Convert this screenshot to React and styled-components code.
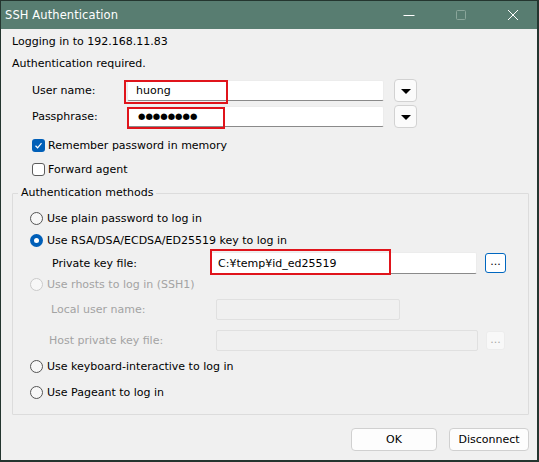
import React from "react";
import styled, { createGlobalStyle, css } from "styled-components";

// TeraTerm style "SSH Authentication" dialog

const GlobalStyle = createGlobalStyle`
	html, body {
		margin: 0;
		padding: 0;
		background: #000;
	}
	body {
		font-family: "DejaVu Sans", Verdana, sans-serif;
		font-size: 11px;
		color: #000;
	}
	* {
		box-sizing: border-box;
	}
`;

const Window = styled.div`
	width: 539px;
	height: 462px;
	display: flex;
	flex-direction: column;
	background: #f0f0f0;
	border: 1px solid #24352f;
	border-right-width: 2px;
	border-bottom-width: 2px;
	overflow: hidden;
`;

const TitleBar = styled.div`
	height: 28px;
	flex: none;
	display: flex;
	align-items: center;
	background: #587d71;
	color: #fff;
	padding-left: 4px;
`;

const Title = styled.div`
	flex: 1;
	font-size: 11.5px;
	letter-spacing: 0.1px;
`;

const Controls = styled.div`
	display: flex;
	height: 100%;
	margin-right: -2px;
`;

const ControlCell = styled.div`
	width: 52px;
	height: 100%;
	display: flex;
	align-items: center;
	justify-content: center;
`;

const Body = styled.div`
	flex: 1;
	display: flex;
	flex-direction: column;
	padding: 4px 8px 0 11px;
`;

const InfoLine = styled.div`
	height: 18px;
	line-height: 18px;
	margin-top: ${(p) => p.$gap || 0}px;
`;

const Row = styled.div`
	display: flex;
	align-items: center;
	height: ${(p) => p.$h || 18}px;
	margin-top: ${(p) => p.$gap || 0}px;
	padding-left: ${(p) => p.$indent || 0}px;
`;

const Label = styled.div`
	width: ${(p) => p.$w}px;
	flex: none;
	color: ${(p) => (p.$disabled ? "#a3a3a3" : "#000")};
`;

const InputWrap = styled.div`
	position: relative;
	width: ${(p) => p.$w}px;
	height: ${(p) => p.$h || 21}px;
	flex: none;
`;

const TextBox = styled.div`
	width: 100%;
	height: 100%;
	display: flex;
	align-items: center;
	padding-left: ${(p) => p.$pad || 8}px;
	background: ${(p) => (p.$disabled ? "#f0f0f0" : "#fff")};
	border: 1px solid ${(p) => (p.$disabled ? "#e0e0e0" : "#ececec")};
	${(p) =>
		!p.$disabled &&
		css`
			border-bottom-color: #8a8a8a;
		`}
	border-radius: 2px;
	font-size: ${(p) => p.$fs || 11}px;
`;

// red annotation frame drawn over a field
const Highlight = styled.div`
	position: absolute;
	left: ${(p) => p.$x}px;
	top: ${(p) => p.$y}px;
	width: ${(p) => p.$w}px;
	height: ${(p) => p.$h}px;
	border: 2px solid #e0141b;
	pointer-events: none;
`;

const DropButton = styled.div`
	width: 23px;
	height: 23px;
	margin-left: 10px;
	display: flex;
	align-items: center;
	justify-content: center;
	background: #fbfbfb;
	border: 1px solid #d2d2d2;
	border-radius: 4px;
`;

const Arrow = styled.div`
	width: 0;
	height: 0;
	border-left: 5px solid transparent;
	border-right: 5px solid transparent;
	border-top: 5px solid #000;
	margin-top: 1px;
`;

const Dots = styled.span`
	font-size: 8.5px;
	letter-spacing: 0;
	line-height: 1;
`;

const CheckBox = styled.div`
	width: 13px;
	height: 13px;
	flex: none;
	margin-right: 3px;
	border-radius: 3px;
	display: flex;
	align-items: center;
	justify-content: center;
	${(p) =>
		p.$checked
			? css`
					background: #005fb8;
			  `
			: css`
					background: #fff;
					border: 1px solid #5c5c5c;
			  `}
`;

const Radio = styled.div`
	width: 13px;
	height: 13px;
	flex: none;
	margin-right: 4px;
	border-radius: 50%;
	display: flex;
	align-items: center;
	justify-content: center;
	${(p) =>
		p.$checked
			? css`
					background: #005fb8;
			  `
			: css`
					background: #f7f7f7;
					border: 1px solid ${p.$disabled ? "#cacaca" : "#555"};
			  `}
`;

const RadioDot = styled.div`
	width: 5px;
	height: 5px;
	border-radius: 50%;
	background: #fff;
`;

const Text = styled.span`
	color: ${(p) => (p.$disabled ? "#a3a3a3" : "#000")};
	white-space: nowrap;
`;

const Group = styled.div`
	margin-top: 15px;
	border: 1px solid #dcdcdc;
	border-radius: 1px;
	padding-bottom: 13px;
	display: flex;
	flex-direction: column;
`;

const GroupTitle = styled.div`
	align-self: flex-start;
	margin: -9px 0 0 5px;
	padding: 0 3px;
	height: 16px;
	line-height: 16px;
	background: #f0f0f0;
`;

const SmallButton = styled.div`
	width: ${(p) => p.$w}px;
	height: ${(p) => p.$h}px;
	margin-left: 8px;
	display: flex;
	align-items: center;
	justify-content: center;
	border-radius: 3px;
	font-size: 11px;
	padding-bottom: 3px;
	${(p) =>
		p.$disabled
			? css`
					background: #f8f8f8;
					border: 1px solid #ececec;
					color: #a8a8a8;
			  `
			: css`
					background: #fff;
					border: 1px solid #0067c0;
					color: #000;
			  `}
`;

const Footer = styled.div`
	display: flex;
	justify-content: flex-end;
	gap: 12px;
	margin-top: 13px;
`;

const Button = styled.div`
	width: ${(p) => p.$w}px;
	height: 23px;
	display: flex;
	align-items: center;
	justify-content: center;
	background: #fdfdfd;
	border: 1px solid #d0d0d0;
	border-radius: 4px;
`;

const CheckMark = () => (
	<svg width="9" height="9" viewBox="0 0 9 9">
		<path d="M1.5 4.8 L3.6 6.8 L7.5 2.2" fill="none" stroke="#fff" strokeWidth="1.2" />
	</svg>
);

const RadioRow = ({ checked, disabled, gap, children }) => (
	<Row $indent={17} $gap={gap}>
		<Radio $checked={checked} $disabled={disabled}>
			{checked && <RadioDot />}
		</Radio>
		<Text $disabled={disabled}>{children}</Text>
	</Row>
);

export default function App() {
	return (
		<>
			<GlobalStyle />
			<Window>
				<TitleBar>
					<Title>SSH Authentication</Title>
					<Controls>
						<ControlCell>
							<svg width="12" height="12" viewBox="0 0 12 12">
								<path d="M0.5 6.5 H11.5" stroke="#fff" strokeWidth="1" />
							</svg>
						</ControlCell>
						<ControlCell>
							<svg width="12" height="12" viewBox="0 0 12 12">
								<rect x="1.5" y="1.5" width="9" height="9" rx="1" fill="none" stroke="#8aa69b" strokeWidth="1" />
							</svg>
						</ControlCell>
						<ControlCell>
							<svg width="12" height="12" viewBox="0 0 12 12">
								<path d="M1 1 L11 11 M11 1 L1 11" stroke="#fff" strokeWidth="1" />
							</svg>
						</ControlCell>
					</Controls>
				</TitleBar>

				<Body>
					<InfoLine>Logging in to 192.168.11.83</InfoLine>
					<InfoLine $gap={4}>Authentication required.</InfoLine>

					<Row $h={23} $gap={6} $indent={20}>
						<Label $w={95}>User name:</Label>
						<InputWrap $w={257}>
							<TextBox>huong</TextBox>
							<Highlight $x={-3} $y={0} $w={104} $h={24} />
						</InputWrap>
						<DropButton>
							<Arrow />
						</DropButton>
					</Row>

					<Row $h={23} $gap={3} $indent={20}>
						<Label $w={95}>Passphrase:</Label>
						<InputWrap $w={257}>
							<TextBox $pad={10}>
								<Dots>●●●●●●●●</Dots>
							</TextBox>
							<Highlight $x={0} $y={1} $w={98} $h={22} />
						</InputWrap>
						<DropButton>
							<Arrow />
						</DropButton>
					</Row>

					<Row $gap={8} $indent={20}>
						<CheckBox $checked>
							<CheckMark />
						</CheckBox>
						<Text>Remember password in memory</Text>
					</Row>
					<Row $gap={6} $indent={20}>
						<CheckBox />
						<Text>Forward agent</Text>
					</Row>

					<Group>
						<GroupTitle>Authentication methods</GroupTitle>
						<RadioRow gap={8}>Use plain password to log in</RadioRow>
						<RadioRow gap={4} checked>
							Use RSA/DSA/ECDSA/ED25519 key to log in
						</RadioRow>

						<Row $h={22} $gap={3} $indent={39}>
							<Label $w={158}>Private key file:</Label>
							<InputWrap $w={267} $h={22}>
								<TextBox $pad={7}>C:¥temp¥id_ed25519</TextBox>
								<Highlight $x={0} $y={-3} $w={181} $h={26} />
							</InputWrap>
							<SmallButton $w={21} $h={20}>...</SmallButton>
						</Row>

						<RadioRow gap={1} disabled>
							Use rhosts to log in (SSH1)
						</RadioRow>

						<Row $h={21} $gap={6} $indent={38}>
							<Label $w={165} $disabled>
								Local user name:
							</Label>
							<InputWrap $w={184}>
								<TextBox $disabled />
							</InputWrap>
						</Row>

						<Row $h={21} $gap={10} $indent={36}>
							<Label $w={167} $disabled>
								Host private key file:
							</Label>
							<InputWrap $w={262}>
								<TextBox $disabled />
							</InputWrap>
							<SmallButton $w={19} $h={19} $disabled>
								...
							</SmallButton>
						</Row>

						<RadioRow gap={6}>Use keyboard-interactive to log in</RadioRow>
						<RadioRow gap={8}>Use Pageant to log in</RadioRow>
					</Group>

					<Footer>
						<Button $w={86}>OK</Button>
						<Button $w={80}>Disconnect</Button>
					</Footer>
				</Body>
			</Window>
		</>
	);
}
